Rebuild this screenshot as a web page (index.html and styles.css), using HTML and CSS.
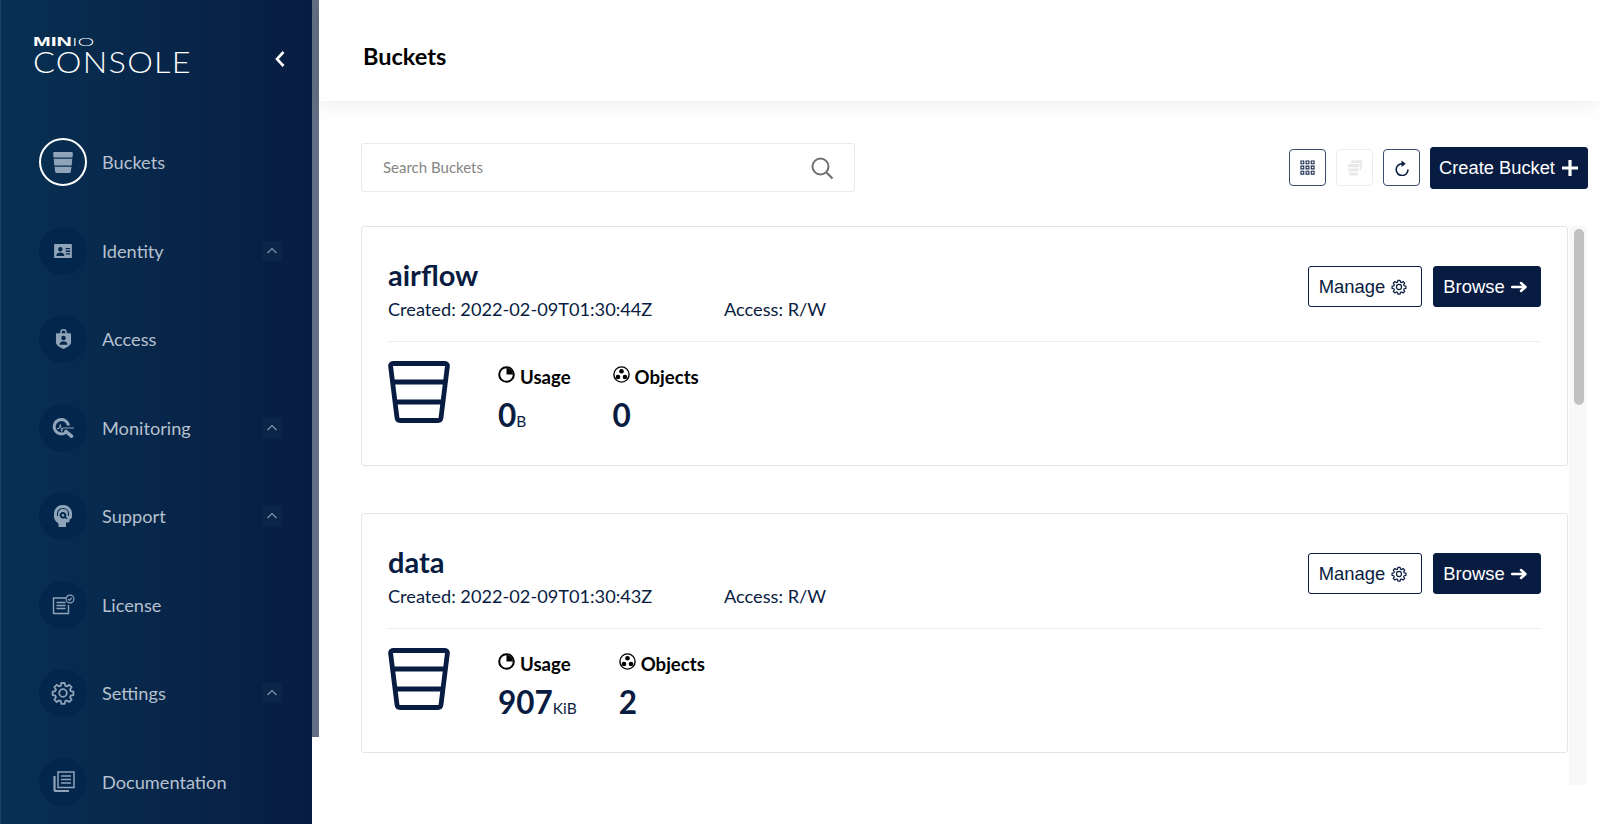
FILE: index.html
```html
<!DOCTYPE html>
<html lang="en">
<head>
  <meta charset="UTF-8">
  <meta name="viewport" content="width=device-width, initial-scale=1.0">
  <title>MinIO Console - Buckets</title>
  <link rel="stylesheet" href="styles.css">
</head>
<body>
  <svg class="defs" width="0" height="0">
    <symbol id="bucket" viewBox="0 0 62 62">
      <path d="M5 2.500h52c1.600 0 2.600 1.200 2.400 2.800L53 56.700c-.2 1.600-1.400 2.800-3 2.800H12c-1.600 0-2.800-1.200-3-2.800L2.600 5.300C2.400 3.700 3.400 2.500 5 2.500zM5 21h52M8 41h46" fill="none" stroke="currentColor" stroke-width="4.800" stroke-linejoin="round"/>
    </symbol>
    <symbol id="gear" viewBox="0 0 24 24">
      <path d="M10.300 2h3.400l.5 2.700 1.700.7 2.300-1.600 2.400 2.400-1.600 2.300.7 1.700 2.700.5v3.400l-2.700.5-.7 1.700 1.600 2.300-2.400 2.400-2.300-1.600-1.700.7-.5 2.700h-3.400l-.5-2.700-1.700-.7-2.300 1.600-2.400-2.400 1.600-2.300-.7-1.700-2.700-.5v-3.400l2.700-.5.7-1.700-1.600-2.300 2.400-2.400 2.300 1.600 1.700-.7z" fill="none" stroke="currentColor" stroke-width="1.800" stroke-linejoin="round"/>
      <circle cx="12" cy="12" r="3.800" fill="none" stroke="currentColor" stroke-width="1.800"/>
    </symbol>
    <symbol id="usage" viewBox="0 0 17 17">
      <circle cx="8.500" cy="8.500" r="7.300" fill="none" stroke="currentColor" stroke-width="2"/>
      <path d="M8.500 2v6.500H15A6.500 6.500 0 0 0 8.500 2z" fill="currentColor"/>
    </symbol>
    <symbol id="objects" viewBox="0 0 17 17">
      <circle cx="8.500" cy="8.500" r="7.600" fill="none" stroke="currentColor" stroke-width="1.400"/>
      <circle cx="8.500" cy="5.300" r="2.300" fill="currentColor"/>
      <circle cx="5" cy="11" r="2.300" fill="currentColor"/>
      <circle cx="12" cy="11" r="2.300" fill="currentColor"/>
    </symbol>
    <symbol id="arrow" viewBox="0 0 16 12">
      <path d="M1 6h13M10 2l4.500 4-4.500 4" fill="none" stroke="currentColor" stroke-width="2.500" stroke-linecap="round" stroke-linejoin="round"/>
    </symbol>
    <symbol id="chevron" viewBox="0 0 20 20">
      <path d="M5.500 12l4.500-4.500 4.500 4.500" fill="none" stroke="currentColor" stroke-width="1.200"/>
    </symbol>
  </svg>

  <div class="app">
    <!-- Sidebar -->
    <aside class="sidebar">
      <div class="brand">
        <div class="logo">
          <div class="logo-top"><b>MIN</b><span>IO</span></div>
          <div class="logo-name">CONSOLE</div>
        </div>
        <svg class="collapse" width="12" height="18" viewBox="0 0 12 18"><path d="M9.500 2L3 9l6.500 7" fill="none" stroke="#fff" stroke-width="2.600"/></svg>
      </div>

      <nav class="menu">
        <a class="menu-item active">
          <span class="menu-icon">
            <svg width="20" height="21" viewBox="0 0 20 21"><path d="M1.500 0h17c.9 0 1.500.7 1.400 1.500L19.500 5.500H.5L.1 1.500C0 .7.600 0 1.500 0zM.7 6.800h18.600l-.6 6.700H1.300zM1.500 14.800h17l-.7 4.900c-.1.800-.7 1.300-1.500 1.300H3.700c-.8 0-1.400-.5-1.500-1.300z" fill="currentColor"/></svg>
          </span>
          <span class="menu-label">Buckets</span>
        </a>
        <a class="menu-item">
          <span class="menu-icon">
            <svg width="20" height="16" viewBox="0 0 22 18"><path fill-rule="evenodd" d="M2 1h18c.6 0 1 .4 1 1v14c0 .6-.4 1-1 1H2c-.6 0-1-.4-1-1V2c0-.6.4-1 1-1zm6 3.500a2.500 2.500 0 1 0 0 5 2.500 2.500 0 0 0 0-5zM3.500 14.500h9c0-2.500-2-3.800-4.500-3.800s-4.500 1.300-4.500 3.800zM14 5.500v1.500h5V5.500zM14 8.500V10h5V8.500zM14 11.500V13h5v-1.500z" fill="currentColor"/></svg>
          </span>
          <span class="menu-label">Identity</span>
          <span class="menu-toggle"><svg width="20" height="20"><use href="#chevron"/></svg></span>
        </a>
        <a class="menu-item">
          <span class="menu-icon">
            <svg width="17" height="22" viewBox="0 0 18 22"><path fill-rule="evenodd" d="M5.500 5V4a3.500 3.500 0 0 1 7 0v1H16c.6 0 1 .4 1 1v9c0 2-3.500 4.800-8 6.500C4.500 19.800 1 17 1 15V6c0-.6.4-1 1-1zm1.500 0h4V4a2 2 0 0 0-4 0zm2 2.500a2.400 2.400 0 1 0 0 4.800 2.400 2.400 0 0 0 0-4.800zM4.800 17h8.400c0-2.300-1.900-3.600-4.200-3.600S4.800 14.700 4.800 17z" fill="currentColor"/></svg>
          </span>
          <span class="menu-label">Access</span>
        </a>
        <a class="menu-item">
          <span class="menu-icon">
            <svg width="22" height="20" viewBox="0 0 22 20"><path d="M16.500 7.500A7.200 7.200 0 1 0 14.300 14" fill="none" stroke="currentColor" stroke-width="3"/><path d="M14 13.500l5.500 4.700" fill="none" stroke="currentColor" stroke-width="3.600" stroke-linecap="round"/><path d="M5 10.500h2l1.300-4 1.400 7 1-3.500H22" fill="none" stroke="currentColor" stroke-width="1"/></svg>
          </span>
          <span class="menu-label">Monitoring</span>
          <span class="menu-toggle"><svg width="20" height="20"><use href="#chevron"/></svg></span>
        </a>
        <a class="menu-item">
          <span class="menu-icon">
            <svg width="20" height="22" viewBox="0 0 20 22"><path fill-rule="evenodd" d="M10 0c5 0 9 3.500 9 8.500v3.300c0 1.500-1 2.300-2.200 2.500l-.3 1.700c-.2 1-1 1.500-2 1.500H13v4.500H5.500v-3.500C2.800 16.800 1 14.800 1 11.800V8.500C1 3.500 5 0 10 0zm0 7a3.300 3.300 0 1 0 2 5.900l2 1.300.7-1-1.800-1.300A3.300 3.300 0 0 0 10 7zm0 1.900a1.400 1.400 0 1 1 0 2.800 1.400 1.400 0 0 1 0-2.800z" fill="currentColor"/><path d="M4.500 11V8.500C4.500 5.500 7 3.500 10 3.500s5.500 2 5.500 5V11" fill="none" stroke="#04294f" stroke-width="1.100"/></svg>
          </span>
          <span class="menu-label">Support</span>
          <span class="menu-toggle"><svg width="20" height="20"><use href="#chevron"/></svg></span>
        </a>
        <a class="menu-item">
          <span class="menu-icon">
            <svg width="23" height="21" viewBox="0 0 23 21"><path d="M14 4H1.500v15.500h15V11M4.500 8.500h9M4.500 11.500h9M4.500 14.500h9" fill="none" stroke="currentColor" stroke-width="1.400"/><circle cx="18" cy="5" r="3.900" fill="none" stroke="currentColor" stroke-width="1.200"/><path d="M16.200 5l1.400 1.400 2.200-2.600" fill="none" stroke="currentColor" stroke-width="1.200"/></svg>
          </span>
          <span class="menu-label">License</span>
        </a>
        <a class="menu-item">
          <span class="menu-icon">
            <svg width="24" height="24"><use href="#gear"/></svg>
          </span>
          <span class="menu-label">Settings</span>
          <span class="menu-toggle"><svg width="20" height="20"><use href="#chevron"/></svg></span>
        </a>
        <a class="menu-item">
          <span class="menu-icon">
            <svg width="23" height="22" viewBox="0 0 23 22"><path d="M6 1h16v15.500H6zM9 5h10M9 8.500h10M9 12h10" fill="none" stroke="currentColor" stroke-width="1.500"/><path d="M2.500 5v13.500c0 1 .6 1.500 1.500 1.500h13" fill="none" stroke="currentColor" stroke-width="2.200"/></svg>
          </span>
          <span class="menu-label">Documentation</span>
        </a>
      </nav>
    </aside>
    <div class="side-scroll"></div>

    <main class="content">
      <header class="page-header">
        <h1>Buckets</h1>
      </header>

      <!-- Search and actions -->
      <div class="toolbar">
        <div class="search">
          <span>Search Buckets</span>
          <svg width="24" height="24" viewBox="0 0 24 24"><circle cx="10.500" cy="10.500" r="8" fill="none" stroke="#6f6f6f" stroke-width="2"/><path d="M16.500 16.500l6 6" stroke="#6f6f6f" stroke-width="2.200"/></svg>
        </div>
        <div class="actions">
          <button class="icon-btn">
            <svg width="15" height="15" viewBox="0 0 16 16"><path d="M1 1h3v3H1zM6.500 1h3v3h-3zM12 1h3v3h-3zM1 6.500h3v3H1zM6.500 6.500h3v3h-3zM12 6.500h3v3h-3zM1 12h3v3H1zM6.500 12h3v3h-3zM12 12h3v3h-3z" fill="none" stroke="#1d2f52" stroke-width="1.200"/></svg>
          </button>
          <button class="icon-btn disabled">
            <svg width="16" height="16" viewBox="0 0 16 16"><path d="M4 .5h11.500L14 10.500h-1.500L13.500 3H4zM.5 4h12l-.4 3.300H.9zM1.100 8.500h10.800l-.4 3H1.500zM1.700 12.700h9.600l-.4 2.800H2.100z" fill="#e8e8e8"/></svg>
          </button>
          <button class="icon-btn">
            <svg width="14" height="16" viewBox="0 0 14 16"><path d="M13 9.500a5.900 5.900 0 1 1-6-5.800" fill="none" stroke="#081c42" stroke-width="1.600"/><path d="M6.500 .5l4.200 3.200-4.200 3.200z" fill="#081c42"/></svg>
          </button>
          <button class="btn btn-primary btn-create">Create Bucket
            <svg width="18" height="18" viewBox="0 0 18 18"><path d="M9 1v16M1 9h16" stroke="#fff" stroke-width="3.200"/></svg>
          </button>
        </div>
      </div>

      <!-- Bucket list -->
      <div class="bucket-area">
        <div class="bucket-list">
          <section class="card">
            <div class="card-head">
              <div>
                <h2>airflow</h2>
                <div class="meta"><span class="created">Created: 2022-02-09T01:30:44Z</span><span>Access: R/W</span></div>
              </div>
              <div class="card-actions">
                <button class="btn btn-outline">Manage <svg width="16" height="16"><use href="#gear"/></svg></button>
                <button class="btn btn-primary">Browse <svg width="16" height="12"><use href="#arrow"/></svg></button>
              </div>
            </div>
            <div class="card-body">
              <svg class="big-bucket" width="62" height="62"><use href="#bucket"/></svg>
              <div class="stat">
                <div class="stat-label"><svg width="17" height="17"><use href="#usage"/></svg>Usage</div>
                <div class="stat-value">0<small>B</small></div>
              </div>
              <div class="stat">
                <div class="stat-label"><svg width="17" height="17"><use href="#objects"/></svg>Objects</div>
                <div class="stat-value">0</div>
              </div>
            </div>
          </section>

          <section class="card">
            <div class="card-head">
              <div>
                <h2>data</h2>
                <div class="meta"><span class="created">Created: 2022-02-09T01:30:43Z</span><span>Access: R/W</span></div>
              </div>
              <div class="card-actions">
                <button class="btn btn-outline">Manage <svg width="16" height="16"><use href="#gear"/></svg></button>
                <button class="btn btn-primary">Browse <svg width="16" height="12"><use href="#arrow"/></svg></button>
              </div>
            </div>
            <div class="card-body">
              <svg class="big-bucket" width="62" height="62"><use href="#bucket"/></svg>
              <div class="stat">
                <div class="stat-label"><svg width="17" height="17"><use href="#usage"/></svg>Usage</div>
                <div class="stat-value">907<small>KiB</small></div>
              </div>
              <div class="stat">
                <div class="stat-label"><svg width="17" height="17"><use href="#objects"/></svg>Objects</div>
                <div class="stat-value">2</div>
              </div>
            </div>
          </section>
        </div>
        <div class="list-scroll"><div class="list-thumb"></div></div>
      </div>
    </main>
  </div>
</body>
</html>
```

FILE: styles.css
```css
/* Basic Reset */
* {
  margin: 0;
  padding: 0;
  box-sizing: border-box;
}

html, body {
  height: 100%;
  overflow: hidden;
}

body {
  font-family: Lato, "Liberation Sans", sans-serif;
  background-color: #fff;
  color: #081c42;
}

.defs {
  position: absolute;
}

.app {
  display: flex;
  height: 824px;
}

/* Sidebar */
.sidebar {
  width: 312px;
  flex-shrink: 0;
  background: linear-gradient(90deg, #073052 0%, #081c42 100%);
  border-left: 1px solid #1d4263;
  overflow: hidden;
}

.side-scroll {
  width: 7px;
  height: 737px;
  flex-shrink: 0;
  background-color: #636e84;
}

.brand {
  display: flex;
  align-items: center;
  justify-content: space-between;
  height: 118px;
  padding: 0 26px 0 32px;
}

.logo {
  color: #fff;
  margin-top: -7px;
}

.logo-top {
  font-family: "Liberation Sans", sans-serif;
  font-size: 12.500px;
  line-height: 11px;
  transform-origin: left center;
  transform: scaleX(1.7);
}

.logo-top b {
  font-weight: 700;
}

.logo-top span {
  font-family: Lato, sans-serif;
  font-weight: 300;
}

.logo-name {
  margin-top: -1px;
  font-size: 30px;
  line-height: 28px;
  font-weight: 300;
  letter-spacing: 1.200px;
  transform-origin: left center;
  transform: scaleX(1.08);
}

.menu-item {
  display: flex;
  align-items: center;
  height: 88.500px;
  padding-left: 38px;
  color: #b5c1cf;
}

.menu-icon {
  display: flex;
  align-items: center;
  justify-content: center;
  width: 48px;
  height: 48px;
  border-radius: 50%;
  background-color: #03264c;
  color: #8fa3b9;
}

.menu-item.active .menu-icon {
  background-color: transparent;
  border: 2px solid #fff;
}

.menu-label {
  margin-left: 15px;
  font-size: 18.200px;
  flex: 1;
}

.menu-toggle {
  display: flex;
  width: 20px;
  height: 20px;
  margin-right: 30px;
  background-color: #0a2548;
  color: #8595ab;
}

/* Main content */
.content {
  flex: 1;
  min-width: 0;
}

.page-header {
  display: flex;
  align-items: center;
  height: 101px;
  padding: 10px 0 0 44px;
  background-color: #fff;
  box-shadow: 0 3px 20px rgba(0, 0, 0, 0.08);
}

h1 {
  font-size: 23.500px;
  font-weight: 700;
  color: #000;
}

.toolbar {
  display: flex;
  align-items: center;
  justify-content: space-between;
  margin-top: 42px;
  padding: 0 12px 0 42px;
}

.search {
  display: flex;
  align-items: center;
  justify-content: space-between;
  width: 494px;
  height: 49px;
  padding: 0 20px 0 21px;
  border: 1px solid #eaeaea;
  border-radius: 3px;
  font-size: 15px;
  color: #858585;
}

.search span {
  margin-bottom: 2px;
}

.actions {
  display: flex;
  align-items: center;
  gap: 10px;
}

.icon-btn {
  display: flex;
  align-items: center;
  justify-content: center;
  width: 37px;
  height: 37px;
  background-color: #fff;
  border: 1px solid #3c4c6c;
  border-radius: 4px;
}

.icon-btn.disabled {
  border-color: #ececec;
}

.btn {
  display: inline-flex;
  align-items: center;
  justify-content: center;
  gap: 6px;
  height: 41px;
  font-family: "Liberation Sans", sans-serif;
  font-size: 18.400px;
  border-radius: 3px;
  border: 1px solid #081c42;
}

.btn-primary {
  background-color: #081c42;
  color: #fff;
}

.btn-outline {
  background-color: #fff;
  color: #081c42;
  width: 114px;
}

.card-actions .btn {
  padding-right: 4px;
}

.card-actions .btn-primary {
  width: 108px;
}

.btn-create {
  width: 158px;
  height: 42px;
  font-size: 18.300px;
}

.bucket-area {
  display: flex;
  margin-top: 34px;
  padding-left: 42px;
}

.bucket-list {
  display: flex;
  flex-direction: column;
  gap: 47px;
  width: 1207px;
}

.card {
  height: 240px;
  padding: 0 26px;
  border: 1px solid #e5e5e5;
  border-radius: 3px;
}

.card-head {
  display: flex;
  justify-content: space-between;
  height: 115px;
  border-bottom: 1px solid #eeeeee;
}

h2 {
  margin-top: 30px;
  font-size: 29px;
  line-height: 36px;
  font-weight: 700;
}

.meta {
  margin-top: 5px;
  font-size: 18.200px;
  line-height: 22px;
}

.created {
  display: inline-block;
  width: 336px;
}

.card-actions {
  display: flex;
  gap: 11px;
  margin-top: 39px;
}

.card-body {
  display: flex;
  padding-top: 19px;
  color: #081c42;
}

.big-bucket {
  margin-right: 48px;
}

.stat {
  margin-right: 42px;
  padding-top: 5px;
}

.stat-label {
  display: flex;
  align-items: center;
  gap: 5px;
  font-size: 18.600px;
  line-height: 22px;
  font-weight: 700;
  color: #000;
}

.stat-label svg {
  margin-top: -5px;
}

.stat-value {
  margin-top: 8px;
  font-size: 31.500px;
  line-height: 38px;
  font-weight: 700;
}

.stat-value small {
  font-size: 15.500px;
  font-weight: 400;
}

.list-scroll {
  width: 18px;
  height: 559px;
  margin-left: 1px;
  padding: 3px 3px 0 5px;
  background-color: #f8f8f8;
}

.list-thumb {
  height: 176px;
  border-radius: 5px;
  background-color: #c1c1c1;
}
```
